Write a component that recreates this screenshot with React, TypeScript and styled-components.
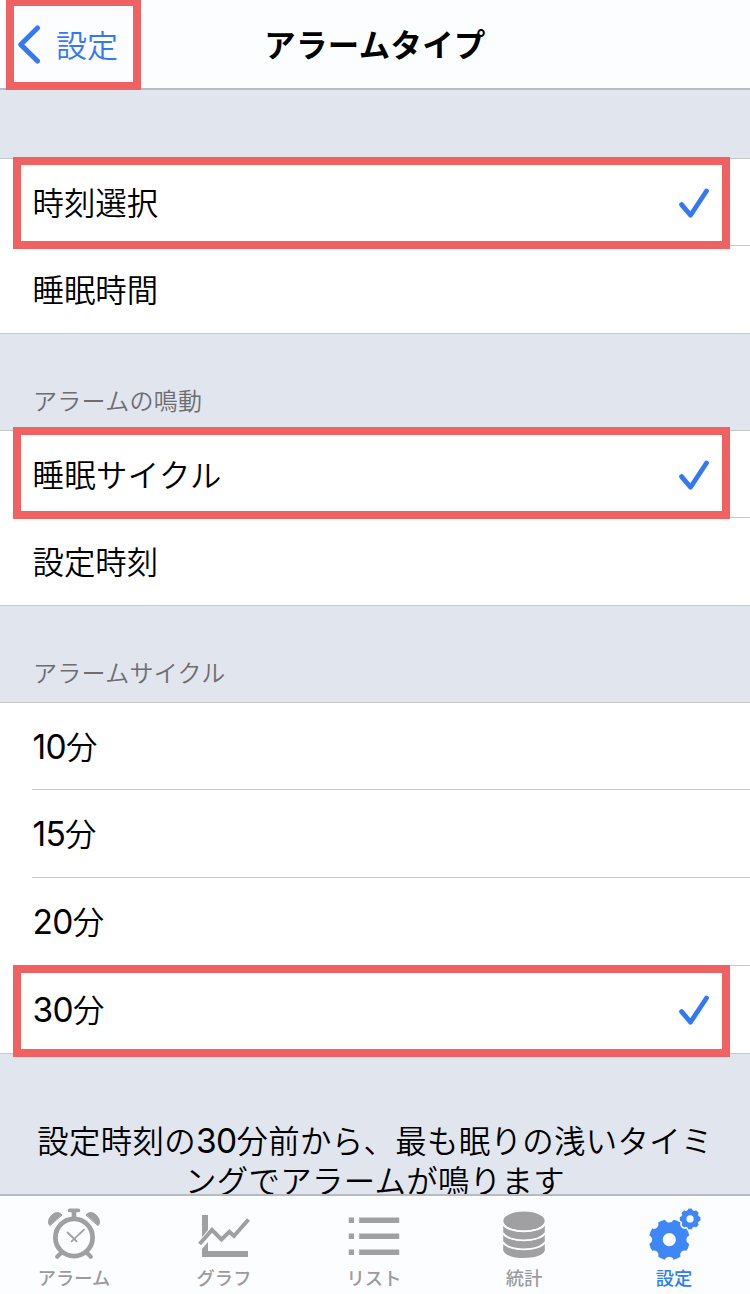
import React from 'react';
import styled, { createGlobalStyle, css } from 'styled-components';

const GlobalStyle = createGlobalStyle`
  * { box-sizing: border-box; }
  body {
    margin: 0;
    background: #e1e5ed;
    font-family: 'Noto Sans CJK JP', sans-serif;
    color: #000;
  }
`;

const BLUE = '#3478f6';
const RED = '#f06161';
const LINE = '#c6c8cc';

const Screen = styled.div`
  width: 750px;
  height: 1294px;
  display: flex;
  flex-direction: column;
  overflow: hidden;
  background: #e1e5ed;
`;

const NavBar = styled.header`
  position: relative;
  flex: none;
  height: 90px;
  display: grid;
  grid-template-columns: 1fr auto 1fr;
  align-items: center;
  padding-left: 17px;
  background: #fcfdff;
  border-bottom: 2px solid #b9bbc0;
`;

const BackButton = styled.button`
  display: flex;
  align-items: center;
  gap: 15px;
  padding: 0;
  border: 0;
  background: none;
  color: ${BLUE};
  font: 350 31px/40px 'Noto Sans CJK JP', sans-serif;

  span {
    margin-bottom: 1px;
  }
`;

const Title = styled.h1`
  margin: 0 17px 1px 0;
  font-size: 31.4px;
  line-height: 40px;
  font-weight: 700;
  letter-spacing: 0.4px;
`;

const Highlight = styled.div<{ $top: number; $left?: number; $width?: number; $height?: number }>`
  position: absolute;
  z-index: 2;
  top: ${p => p.$top}px;
  left: ${p => p.$left ?? 13}px;
  width: ${p => p.$width ?? 717}px;
  height: ${p => p.$height ?? 92}px;
  border: 8px solid ${RED};
  pointer-events: none;
`;

const Content = styled.main`
  flex: 1;
  min-height: 0;
  overflow: hidden;
`;

const SectionHeader = styled.h2<{ $height: number }>`
  margin: 0;
  height: ${p => p.$height}px;
  padding: 0 33px 12px;
  display: flex;
  align-items: flex-end;
  font-size: 24px;
  line-height: 36px;
  font-weight: 350;
  letter-spacing: 0.3px;
  color: #6d6d72;
`;

const Group = styled.ul`
  margin: 0;
  padding: 0;
  list-style: none;
  background: #fff;
  border-top: 1px solid ${LINE};
  border-bottom: 1px solid ${LINE};
`;

const Label = styled.span<{ $spacing?: number }>`
  letter-spacing: ${p => p.$spacing ?? 0}px;
`;

const Row = styled.li`
  position: relative;
  height: 86px;
  padding: 1px 41px 0 32.5px;
  display: flex;
  align-items: center;
  justify-content: space-between;
  font-size: 31.4px;
  line-height: 44px;
  font-weight: 350;

  ${Label} {
    margin-bottom: 2px;
  }

  & + & {
    height: 88px;
  }

  & + &::before {
    content: '';
    position: absolute;
    top: 0;
    left: 32px;
    right: 0;
    height: 1px;
    background: ${LINE};
  }
`;

const Num = styled.span`
  font-family: Inter, sans-serif;
  font-weight: 400;
  font-size: 33.5px;
  line-height: 0;
  letter-spacing: -0.7px;
`;

const Note = styled.p`
  margin: 0;
  padding-top: 66px;
  text-align: center;
  font-size: 31.4px;
  line-height: 40px;
  font-weight: 350;
  letter-spacing: 0.35px;
  white-space: nowrap;
`;

const TabBar = styled.nav`
  flex: none;
  height: 100px;
  display: grid;
  grid-template-columns: repeat(5, 150px);
  background: #fcfdff;
  border-top: 2px solid #b9bbc4;
`;

const Tab = styled.button<{ $active?: boolean }>`
  display: flex;
  flex-direction: column;
  align-items: center;
  padding: 10px 2px 0 0;
  border: 0;
  background: none;
  color: #9b9b9d;
  font: 500 18.3px/26px 'Noto Sans CJK JP', sans-serif;
  ${p => p.$active && css`color: #2f7cf6;`}

  svg {
    display: block;
    flex: none;
    margin-bottom: 4px;
  }
`;

const Check = () => (
  <svg width="30" height="32" viewBox="0 0 30 32" fill="none" stroke={BLUE} strokeWidth="4.8" strokeLinecap="round" strokeLinejoin="round">
    <path d="M2.6 17.6 L11.5 28.2 L27.5 4" />
  </svg>
);

const Chevron = () => (
  <svg width="24" height="40" viewBox="0 0 24 40" fill="none" stroke={BLUE} strokeWidth="5" strokeLinecap="round" strokeLinejoin="round">
    <path d="M20.5 4 L3.8 20.6 L20.5 37" />
  </svg>
);

const AlarmIcon = () => (
  <svg width="54" height="54" viewBox="0 0 54 54" fill="none" stroke="#a0a0a2" strokeLinecap="round">
    <circle cx="27" cy="31.5" r="18.6" strokeWidth="4.8" />
    <path d="M27 5 V11" strokeWidth="4.6" strokeLinecap="butt" />
    <path d="M22.7 4.4 H31.3" strokeWidth="3.8" />
    <path d="M14 47 L10.2 50.8 M40 47 L43.8 50.8" strokeWidth="4.2" />
    <path d="M20.6 26.5 L29.6 35.3 M37 23.7 L24.6 35.3" strokeWidth="1.8" />
    <path d="M14.8 8.8 C11.8 4.9 6.8 6.4 3.7 10.2 C.8 14 1 18 2.8 19.4 Z M39.2 8.8 C42.2 4.9 47.2 6.4 50.3 10.2 C53.2 14 53 18 51.2 19.4 Z" fill="#a0a0a2" strokeWidth="1" strokeLinejoin="round" />
  </svg>
);

const GraphIcon = () => (
  <svg width="54" height="54" viewBox="0 0 54 54" fill="#a0a0a2">
    <path d="M5 9 H11 V24 L5 31 Z M5 43 L11 36 V45 H51 V51 H5 Z" />
    <path d="M2.6 38 L15 24 L24.5 33.5 L32.4 25.8 L37 30 L51.5 13.5" fill="none" stroke="#a0a0a2" strokeWidth="4" />
  </svg>
);

const ListIcon = () => (
  <svg width="54" height="54" viewBox="0 0 54 54" fill="#a0a0a2">
    {[11.5, 27.5, 43.5].map(y => (
      <path key={y} d={`M1.8 ${y} h5.2 v5.6 h-5.2 Z M12.2 ${y} h40 v5.6 h-40 Z`} />
    ))}
  </svg>
);

const StatsIcon = () => (
  <svg width="54" height="54" viewBox="0 0 54 54" fill="#a0a0a2">
    <ellipse cx="27" cy="15" rx="20.7" ry="9.4" />
    {[18.8, 27.8, 36.8].map(y => (
      <path key={y} d={`M6.2 ${y} C11 ${y + 9.4} 43 ${y + 9.4} 47.8 ${y} V${y + 8} C44 ${y + 17.6} 10 ${y + 17.6} 6.2 ${y + 8} Z`} />
    ))}
    {[18, 27, 36].map(y => (
      <path key={y} d={`M6 ${y} C11 ${y + 9.8} 43 ${y + 9.8} 48 ${y}`} fill="none" stroke="#fcfdff" strokeWidth="1.8" />
    ))}
  </svg>
);

// Outline of an eight-toothed gear with rounded notches and a round hole.
const gearPath = (cx: number, cy: number, r: number, hole: number, notch: number, offset: number) => {
  const point = (deg: number) => {
    const a = (deg * Math.PI) / 180;
    return `${(cx + r * Math.cos(a)).toFixed(2)} ${(cy + r * Math.sin(a)).toFixed(2)}`;
  };
  let d = `M${point(offset + 12)}`;
  for (let i = 1; i <= 8; i++) {
    const a = offset + i * 45;
    d += ` A${r} ${r} 0 0 1 ${point(a - 12)} A${notch} ${notch} 0 0 0 ${point(a + 12)}`;
  }
  return `${d} Z M${cx - hole} ${cy} a${hole} ${hole} 0 1 0 ${hole * 2} 0 a${hole} ${hole} 0 1 0 ${-hole * 2} 0 Z`;
};

const GearsIcon = () => (
  <svg width="54" height="54" viewBox="0 0 54 54" fill="#3f87f7" fillRule="evenodd">
    <path d={gearPath(22.3, 33.7, 20.4, 6.6, 4.6, 0)} />
    <path d={gearPath(43.1, 12.9, 10.4, 3.6, 2.4, 22.5)} />
  </svg>
);

const tabs = [
  { label: 'アラーム', Icon: AlarmIcon },
  { label: 'グラフ', Icon: GraphIcon },
  { label: 'リスト', Icon: ListIcon },
  { label: '統計', Icon: StatsIcon },
  { label: '設定', Icon: GearsIcon, active: true },
];

export default function App() {
  return (
    <>
      <GlobalStyle />
      <Screen>
        <NavBar>
          <BackButton>
            <Chevron />
            <span>設定</span>
          </BackButton>
          <Title>アラームタイプ</Title>
          <Highlight $top={-2} $left={6} $width={135} $height={92} />
        </NavBar>
        <Content>
          <SectionHeader $height={68} />
          <Group>
            <Row>
              <Label>時刻選択</Label>
              <Check />
              <Highlight $top={-2} />
            </Row>
            <Row>
              <Label>睡眠時間</Label>
            </Row>
          </Group>
          <SectionHeader $height={96}>アラームの鳴動</SectionHeader>
          <Group>
            <Row>
              <Label $spacing={0.4}>睡眠サイクル</Label>
              <Check />
              <Highlight $top={-4} />
            </Row>
            <Row>
              <Label>設定時刻</Label>
            </Row>
          </Group>
          <SectionHeader $height={96}>アラームサイクル</SectionHeader>
          <Group>
            {[10, 15, 20].map(n => (
              <Row key={n}>
                <Label><Num>{n}</Num>分</Label>
              </Row>
            ))}
            <Row>
              <Label><Num>30</Num>分</Label>
              <Check />
              <Highlight $top={0} />
            </Row>
          </Group>
          <Note>
            設定時刻の<Num>30</Num>分前から、最も眠りの浅いタイミ
            <br />
            ングでアラームが鳴ります
          </Note>
        </Content>
        <TabBar>
          {tabs.map(({ label, Icon, active }) => (
            <Tab key={label} $active={active}>
              <Icon />
              {label}
            </Tab>
          ))}
        </TabBar>
      </Screen>
    </>
  );
}
